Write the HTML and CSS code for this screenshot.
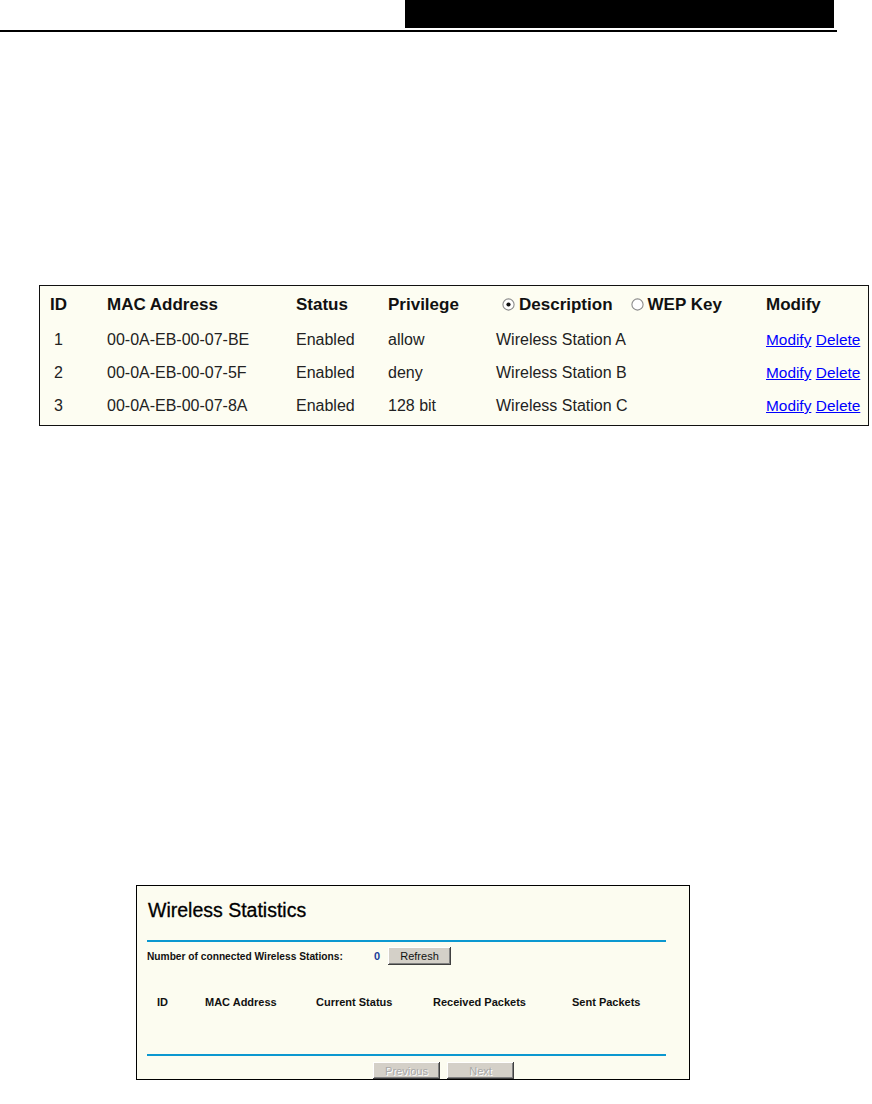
FILE: index.html
```html
<!DOCTYPE html>
<html>
<head>
<meta charset="utf-8">
<title>Wireless</title>
<link rel="stylesheet" href="styles.css">
</head>
<body>
<div class="topbar"><div class="blackbar"></div></div>
<div class="rule"></div>

<div class="filter-box">
  <div class="row head">
    <div class="c-id">ID</div>
    <div class="c-mac">MAC Address</div>
    <div class="c-status">Status</div>
    <div class="c-priv">Privilege</div>
    <div class="c-desc radios">
      <span class="radio-group"><svg class="radio" width="13" height="13" viewBox="0 0 13 13"><circle cx="6.5" cy="6.5" r="5.6" fill="#fff" stroke="#8c8c8c" stroke-width="1.1"/><circle cx="6.5" cy="6.5" r="2.1" fill="#111"/></svg>Description</span>
      <span class="radio-group"><svg class="radio" width="13" height="13" viewBox="0 0 13 13"><circle cx="6.5" cy="6.5" r="5.6" fill="#fff" stroke="#8c8c8c" stroke-width="1.1"/></svg>WEP Key</span>
    </div>
    <div class="c-mod">Modify</div>
  </div>
  <div class="row">
    <div class="c-id num">1</div>
    <div class="c-mac">00-0A-EB-00-07-BE</div>
    <div class="c-status">Enabled</div>
    <div class="c-priv">allow</div>
    <div class="c-desc">Wireless Station A</div>
    <div class="c-mod"><a href="#">Modify</a> <a href="#">Delete</a></div>
  </div>
  <div class="row">
    <div class="c-id num">2</div>
    <div class="c-mac">00-0A-EB-00-07-5F</div>
    <div class="c-status">Enabled</div>
    <div class="c-priv">deny</div>
    <div class="c-desc">Wireless Station B</div>
    <div class="c-mod"><a href="#">Modify</a> <a href="#">Delete</a></div>
  </div>
  <div class="row">
    <div class="c-id num">3</div>
    <div class="c-mac">00-0A-EB-00-07-8A</div>
    <div class="c-status">Enabled</div>
    <div class="c-priv">128 bit</div>
    <div class="c-desc">Wireless Station C</div>
    <div class="c-mod"><a href="#">Modify</a> <a href="#">Delete</a></div>
  </div>
</div>

<div class="stats-box">
  <div class="stats-title">Wireless Statistics</div>
  <div class="blue-line thick"></div>
  <div class="count-row">
    <span class="count-label">Number of connected Wireless Stations:</span>
    <span class="count-val">0</span>
    <span class="btn">Refresh</span>
  </div>
  <div class="stats-head">
    <div>ID</div>
    <div>MAC Address</div>
    <div>Current Status</div>
    <div>Received Packets</div>
    <div>Sent Packets</div>
  </div>
  <div class="blue-line thin"></div>
  <div class="nav-row">
    <span class="btn disabled prev">Previous</span>
    <span class="btn disabled next">Next</span>
  </div>
</div>
</body>
</html>
```
FILE: styles.css
```css
html, body {
  margin: 0;
  padding: 0;
  background: #fff;
}
body {
  font-family: "Liberation Sans", Arial, sans-serif;
  color: #222;
}
.topbar {
  height: 28px;
  display: flex;
}
.blackbar {
  margin-left: 405px;
  width: 429px;
  height: 28px;
  background: #000;
}
.rule {
  margin-top: 2px;
  width: 837px;
  height: 2px;
  background: #000;
}

/* main filter table */
.filter-box {
  margin: 253px 0 0 39px;
  width: 830px;
  box-sizing: border-box;
  border: 1px solid #111;
  background: #fdfdf2;
  padding: 0 0 3px 10px;
}
.row {
  display: grid;
  grid-template-columns: 57px 189px 92px 108px 270px 1fr;
  height: 33px;
  align-items: center;
  font-size: 16px;
}
.row.head {
  height: 37px;
  font-weight: bold;
  font-size: 17px;
  color: #111;
}
.num {
  padding-left: 4px;
}
.radios {
  display: flex;
  align-items: center;
  gap: 18px;
  padding-left: 6px;
}
.radio-group {
  display: flex;
  align-items: center;
  gap: 4px;
}
.radio {
  display: block;
}
.c-mod a {
  color: #0000ff;
  text-decoration: underline;
  font-size: 15.4px;
}

/* wireless statistics */
.stats-box {
  margin: 459px 0 0 136px;
  width: 554px;
  box-sizing: border-box;
  border: 1px solid #000;
  background: #fcfcf0;
  padding: 12px 23px 0 10px;
}
.stats-title {
  font-size: 19.5px;
  line-height: 24px;
  color: #000;
  padding-left: 1px;
  -webkit-text-stroke: 0.3px #000;
}
.blue-line {
  background: #0b98d0;
}
.blue-line.thick {
  margin-top: 18px;
  height: 2px;
}
.blue-line.thin {
  margin-top: 39px;
  height: 2px;
}
.count-row {
  margin-top: 5px;
  height: 18px;
  display: flex;
  align-items: center;
}
.count-label {
  width: 227px;
  font-size: 10.2px;
  font-weight: bold;
  color: #111;
}
.count-val {
  width: 14px;
  font-size: 11px;
  font-weight: bold;
  color: #1a3c9a;
}
.btn {
  display: flex;
  align-items: center;
  justify-content: center;
  box-sizing: border-box;
  height: 18px;
  background: #d4d0c8;
  font-size: 11px;
  color: #111;
  box-shadow: inset -1px -1px #404040, inset 1px 1px #fff, inset -2px -2px #808080;
}
.count-row .btn {
  width: 63px;
}
.stats-head {
  margin-top: 24px;
  height: 26px;
  display: grid;
  grid-template-columns: 48px 111px 117px 139px 1fr;
  align-items: center;
  padding-left: 10px;
  font-size: 11px;
  font-weight: bold;
  color: #111;
}
.nav-row {
  margin-top: 6px;
  display: flex;
  gap: 7px;
  padding-left: 226px;
}
.btn.disabled {
  width: 67px;
  height: 17px;
  color: #a8a8a8;
  text-shadow: 1px 1px #fff;
}
```
